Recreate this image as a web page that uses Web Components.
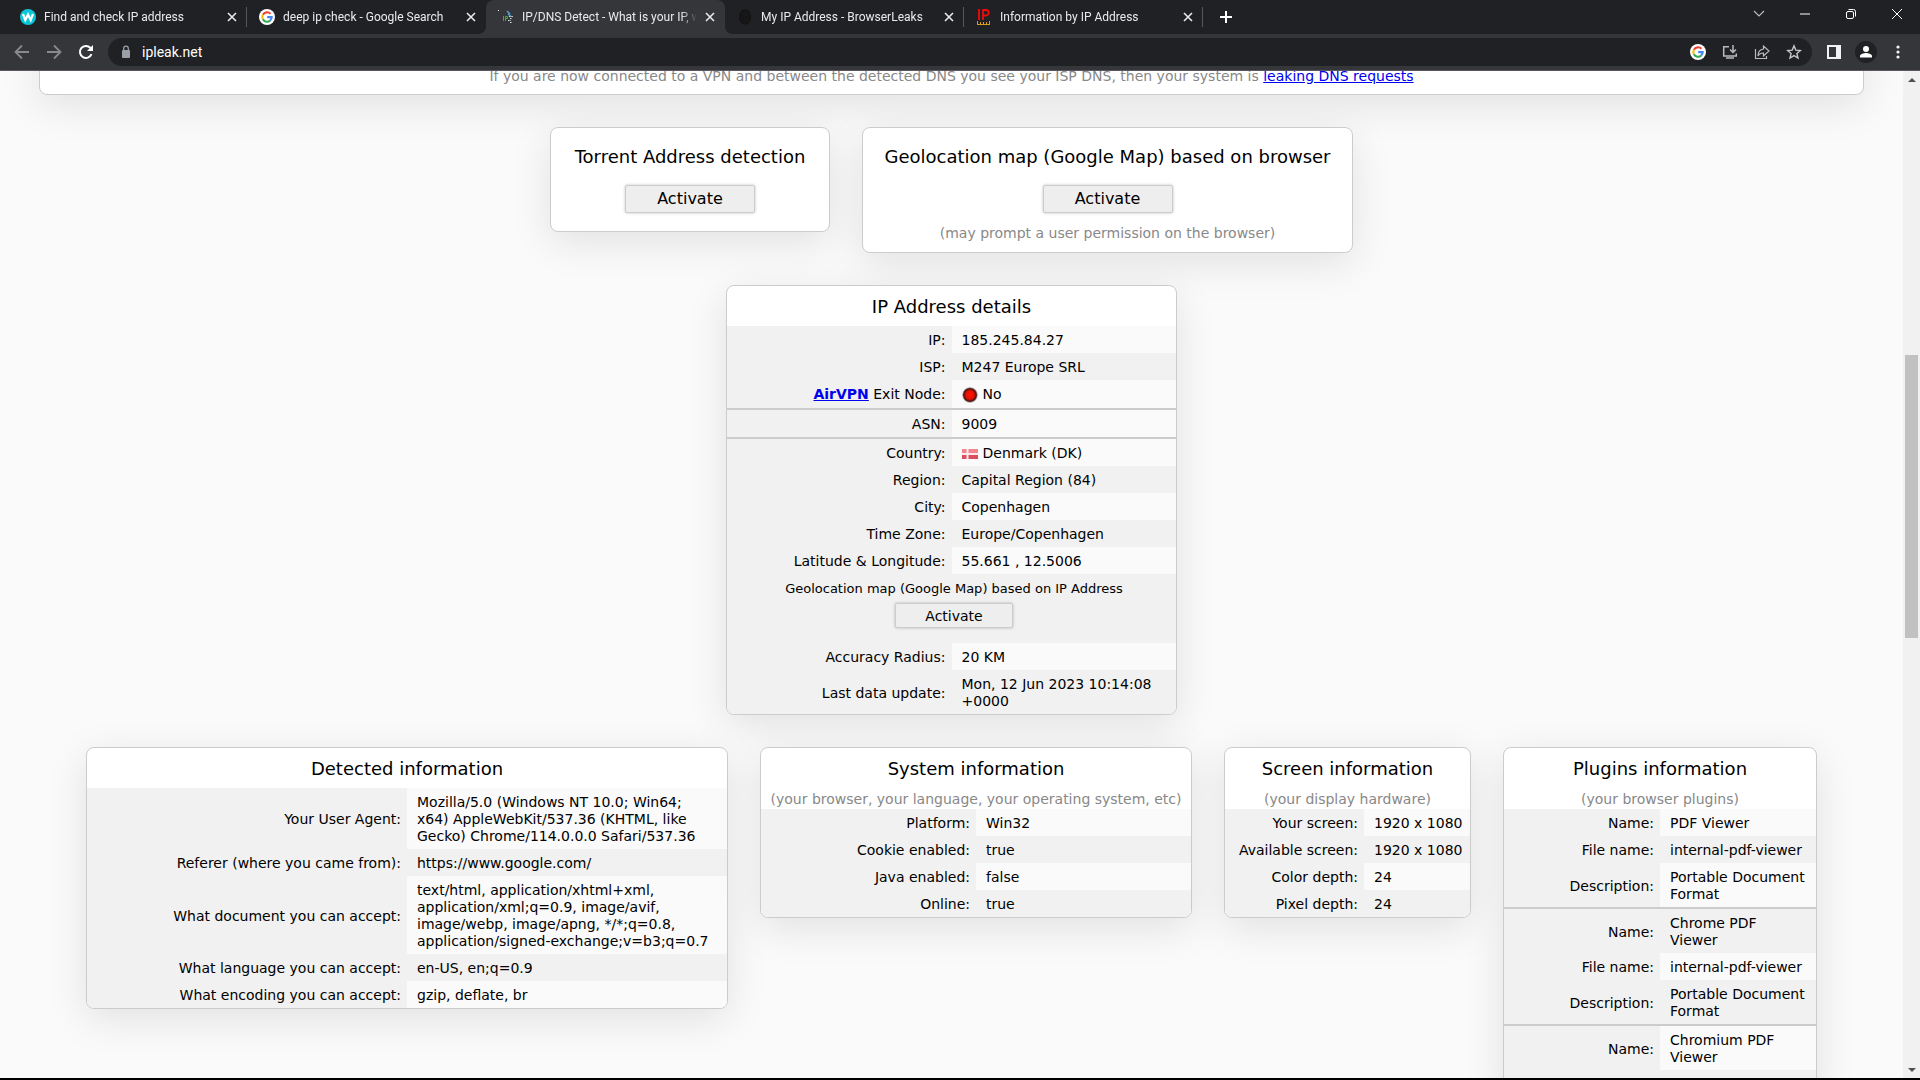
<!DOCTYPE html>
<html lang="en">
<head>
<meta charset="utf-8">
<title>IP/DNS Detect - What is your IP, what is your DNS</title>
<style>
  html, body {
    margin: 0;
    height: 100%;
    overflow: hidden;
  }

  body {
    font: 14px/17px Verdana, "DejaVu Sans", sans-serif;
    color: #000;
  }
</style>
</head>
<body>
<browser-window>
  <tab-strip slot="tabs">
    <browser-tab icon="w">Find and check IP address</browser-tab>
    <browser-tab icon="google">deep ip check - Google Search</browser-tab>
    <browser-tab icon="leak" active>IP/DNS Detect - What is your IP, w</browser-tab>
    <browser-tab icon="finger">My IP Address - BrowserLeaks</browser-tab>
    <browser-tab icon="ip">Information by IP Address</browser-tab>
  </tab-strip>
  <tool-bar slot="toolbar" url="ipleak.net"></tool-bar>
  <leak-page></leak-page>
</browser-window>

<script>
const icons = {
  w: `<svg width="16" height="16" viewBox="0 0 16 16"><circle cx="8" cy="8" r="8" fill="#0bc5d8"/><path d="M3 5l2.300 6L8 5.500l2.700 5.500L13 5" fill="none" stroke="#fff" stroke-width="2.200"/></svg>`,
  google: `<svg width="16" height="16" viewBox="0 0 16 16"><circle cx="8" cy="8" r="8" fill="#fff"/><g fill="none" stroke-width="2.100"><path d="M11.500 4.800A4.700 4.700 0 0 0 3.900 5.800" stroke="#ea4335"/><path d="M3.900 5.800a4.700 4.700 0 0 0 0 4.500" stroke="#fbbc05"/><path d="M3.900 10.300a4.700 4.700 0 0 0 7.300 1.200" stroke="#34a853"/><path d="M11.200 11.500A4.700 4.700 0 0 0 12.700 8.100H8.200" stroke="#4285f4"/></g></svg>`,
  leak: `<svg width="16" height="16" viewBox="0 0 16 16" fill="none"><path d="M0 1.500h1" stroke="#fff"/><path d="M5.500 7v5M7.500 12V7.500h2v2h-2" stroke="#3fae29"/><path d="M9 2l3 3M10 5l3 2" stroke="#4f9fd0" stroke-width="1.500"/><path d="M11 7.500h4M12 9.500h2M10 11.500h3M12 13.500h2" stroke="#dce6ea" stroke-dasharray="1.500 .8"/></svg>`,
  finger: `<svg width="16" height="16" viewBox="0 0 16 16"><ellipse cx="8" cy="8" rx="6" ry="7.500" fill="#111"/><g fill="none" stroke="#26272a" stroke-width=".6"><path d="M4 12V7a4 4 0 0 1 8 0v5M6 14V7a2 2 0 0 1 4 0v7M8 6v9"/></g></svg>`,
  ip: `<svg width="16" height="16" viewBox="0 0 16 16" fill="none"><path d="M3 0v11M7 11V1h3a2.500 2.500 0 0 1 0 5.500H7" stroke="#f00a0a" stroke-width="1.800"/><path d="M1.500 12v3M4.500 13v2M7.500 13v2M10.500 13v2M13.500 12v3M1 15.500h13" stroke="#d99a17"/></svg>`,
  close: `<svg width="10" height="10" viewBox="0 0 10 10"><path d="M1 1l8 8M9 1L1 9" stroke="#e8eaed" stroke-width="1.600"/></svg>`
};

const define = (name, html, setup) => {
  const template = document.createElement('template');
  template.innerHTML = html;

  customElements.define(name, class extends HTMLElement {
    connectedCallback() {
      if (this.shadowRoot) return;
      this.attachShadow({ mode: 'open' }).appendChild(template.content.cloneNode(true));
      if (setup) setup(this, this.shadowRoot);
    }
  });
};

define('browser-window', `
  <style>
    :host {
      display: flex;
      flex-direction: column;
      height: 100vh;
      box-sizing: border-box;
      border-bottom: 2px solid #000;
      background: #202124;
    }

    main {
      display: flex;
      flex: 1;
      min-height: 0;
      border-top: 1px solid #5b5660;
    }
  </style>
  <slot name="tabs"></slot>
  <slot name="toolbar"></slot>
  <main><slot></slot><scroll-bar></scroll-bar></main>
`);

define('tab-strip', `
  <style>
    :host {
      display: flex;
      height: 34px;
      padding-left: 8px;
      background: #202124;
    }

    button {
      display: grid;
      place-items: center;
      width: 46px;
      padding: 0 0 6px;
      border: 0;
      background: none;
    }

    .add {
      padding-bottom: 0;
    }

    .controls {
      display: flex;
      margin-left: auto;
    }
  </style>
  <slot></slot>
  <button class="add" aria-label="New tab"><svg width="12" height="12"><path d="M6 0v12M0 6h12" stroke="#fff" stroke-width="2"/></svg></button>
  <div class="controls">
    <button aria-label="Search tabs"><svg width="12" height="8" fill="none"><path d="M1 1l5 5 5-5" stroke="#bbb" stroke-width="1.200"/></svg></button>
    <button aria-label="Minimize"><svg width="10" height="2"><path d="M0 1h10" stroke="#fff"/></svg></button>
    <button aria-label="Restore"><svg width="12" height="12" fill="none" stroke="#fff"><rect x="1.500" y="3.500" width="7" height="7" rx="1.500"/><path d="M3.500 1.500h5a2 2 0 0 1 2 2v5"/></svg></button>
    <button aria-label="Close"><svg width="12" height="12"><path d="M1 1l10 10M11 1L1 11" stroke="#fff"/></svg></button>
  </div>
`);

define('browser-tab', `
  <style>
    :host {
      display: flex;
      align-items: center;
      flex: 0 1 239px;
      box-sizing: border-box;
      min-width: 0;
      padding: 0 10px 6px 12px;
      position: relative;
      font: 12px/16px Roboto, sans-serif;
      color: #e8eaed;
      padding-top: 6px;
    }

    :host::after {
      content: "";
      position: absolute;
      right: 0;
      top: 7px;
      height: 20px;
      width: 1px;
      background: #55575b;
    }

    :host([active]) {
      background: #35363a;
      border-radius: 8px 8px 0 0;
    }

    /* curved feet of the selected tab */
    :host([active])::before {
      content: "";
      position: absolute;
      left: -8px;
      right: -8px;
      bottom: 0;
      height: 8px;
      background:
        radial-gradient(circle at 0 0, transparent 8px, #35363a 8px) 0 0 / 8px 8px no-repeat,
        radial-gradient(circle at 100% 0, transparent 8px, #35363a 8px) 100% 0 / 8px 8px no-repeat;
    }

    :host([active])::after,
    :host([icon="google"])::after {
      display: none;
    }

    .title {
      flex: 1;
      margin: 0 8px;
      overflow: hidden;
      white-space: nowrap;
      -webkit-mask-image: linear-gradient(90deg, #000 calc(100% - 16px), transparent);
      mask-image: linear-gradient(90deg, #000 calc(100% - 16px), transparent);
    }

    .icon, button {
      display: grid;
      place-items: center;
      flex: none;
    }

    button {
      padding: 0;
      border: 0;
      background: none;
    }
  </style>
  <span class="icon"></span>
  <span class="title"><slot></slot></span>
  <button aria-label="Close tab">${icons.close}</button>
`, (el, root) => {
  root.querySelector('.icon').innerHTML = icons[el.getAttribute('icon')];
});

define('tool-bar', `
  <style>
    :host {
      display: flex;
      align-items: center;
      height: 36px;
      padding: 0 6px;
      background: #35363a;
    }

    button {
      display: grid;
      place-items: center;
      flex: none;
      width: 32px;
      height: 28px;
      padding: 0;
      border: 0;
      background: none;
    }

    .address {
      display: flex;
      align-items: center;
      flex: 1;
      height: 28px;
      margin: 0 6px;
      padding: 0 2px 0 12px;
      border-radius: 14px;
      background: #202124;
    }

    input {
      flex: 1;
      min-width: 0;
      margin-left: 10px;
      padding: 0;
      border: 0;
      background: none;
      color: #fff;
      font: 14px/20px Roboto, sans-serif;
    }
  </style>
  <button aria-label="Back"><svg width="16" height="16" fill="none" stroke="#87898c" stroke-width="1.800"><path d="M15 8H2M8 1.500L1.500 8 8 14.500"/></svg></button>
  <button aria-label="Forward"><svg width="16" height="16" fill="none" stroke="#87898c" stroke-width="1.800"><path d="M1 8h13M8 1.500L14.500 8 8 14.500"/></svg></button>
  <button aria-label="Reload"><svg width="16" height="16" fill="none"><path d="M13.500 10.200A6 6 0 1 1 12.300 3.800L13.500 5" stroke="#fff" stroke-width="2"/><path d="M15 1v6H9z" fill="#fff"/></svg></button>
  <div class="address">
    <svg width="12" height="14" fill="none"><rect x="2" y="5" width="8" height="8" rx="1" fill="#9aa0a6"/><path d="M3.700 6V3.500a2.300 2.300 0 0 1 4.600 0V6" stroke="#9aa0a6" stroke-width="1.300"/></svg>
    <input aria-label="Address" spellcheck="false">
    <button aria-label="Google">${icons.google}</button>
    <button aria-label="Install"><svg width="16" height="16" fill="none" stroke="#bbb" stroke-width="1.500"><path d="M7 2.700H1.700v9.300h12.600V9.500M4 14h8"/><path d="M11 1v7M8 5.500l3 3 3-3"/></svg></button>
    <button aria-label="Share"><svg width="16" height="16" fill="none" stroke="#bbb" stroke-width="1.200"><path d="M1.500 5v9.500h11V12"/><path d="M9.500 5V2l5.500 5-5.500 5V9C7 9 5 10 4 12c0-4 2-6.500 5.500-7z"/></svg></button>
    <button aria-label="Bookmark"><svg width="16" height="16" fill="none" stroke="#c4c6c9" stroke-width="1.400"><path d="M8 1.800l1.800 4.300 4.600.4-3.500 3 1.100 4.500L8 11.600 4 14l1.100-4.500-3.500-3 4.600-.4z"/></svg></button>
  </div>
  <button aria-label="Side panel"><svg width="14" height="14"><path d="M0 0h14v14H0zM2 2v10h7V2z" fill="#f1f3f4" fill-rule="evenodd"/></svg></button>
  <button aria-label="Profile"><svg width="22" height="22" fill="#fff"><circle cx="11" cy="11" r="11" fill="#202124"/><circle cx="11" cy="8" r="3"/><path d="M5 16.500v-1.500c0-2 4-3 6-3s6 1 6 3v1.500z"/></svg></button>
  <button aria-label="Menu"><svg width="4" height="14" fill="#f1f3f4"><circle cx="2" cy="2" r="1.600"/><circle cx="2" cy="7" r="1.600"/><circle cx="2" cy="12" r="1.600"/></svg></button>
`, (el, root) => {
  root.querySelector('input').value = el.getAttribute('url');
});

define('scroll-bar', `
  <style>
    :host {
      display: grid;
      grid-template-rows: 17px 267fr 283fr 423fr 17px;
      justify-items: center;
      align-items: center;
      flex: none;
      width: 17px;
      background: #f1f1f1;
    }

    i {
      grid-row: 3;
      width: 13px;
      height: 100%;
      background: #c1c1c1;
    }

    .down {
      grid-row: 5;
    }
  </style>
  <svg width="8" height="4" fill="#505050"><path d="M0 4l4-4 4 4z"/></svg>
  <i></i>
  <svg class="down" width="8" height="4" fill="#505050"><path d="M0 0l4 4 4-4z"/></svg>
`);

define('info-card', `
  <style>
    :host {
      display: block;
      box-sizing: border-box;
      overflow: hidden;
      border: 1px solid #ccc;
      border-radius: 8px;
      background: #fff;
      box-shadow: 0 10px 40px rgba(0, 0, 0, .1);
      text-align: center;
    }

    h2 {
      margin: 0;
      padding: 10px 0 8px;
      font-size: 18px;
      font-weight: normal;
      line-height: 22px;
      white-space: nowrap;
    }

    p {
      margin: 0;
      padding-top: 1px;
      line-height: 20px;
      color: #888;
      white-space: nowrap;
    }
  </style>
  <h2></h2>
  <p></p>
  <slot></slot>
`, (el, root) => {
  const fill = (tag, text) => {
    const node = root.querySelector(tag);
    if (text) node.textContent = text;
    else node.remove();
  };
  fill('h2', el.getAttribute('heading'));
  fill('p', el.getAttribute('note'));
});

define('activate-button', `
  <style>
    :host {
      display: block;
      text-align: center;
    }

    button {
      width: 130px;
      height: 28px;
      padding: 0;
      border: 1px solid #ccc;
      border-radius: 2px;
      background: #eee;
      box-shadow: 0 0 3px rgba(0, 0, 0, .25);
      color: #000;
      font: 16px/20px Verdana, "DejaVu Sans", sans-serif;
      vertical-align: top;
    }

    :host([small]) button {
      width: 118px;
      height: 25px;
      font-size: 14px;
    }
  </style>
  <button>Activate</button>
`);

// Base for the detail tables: a row is [label, value, flags]
class InfoTable extends HTMLElement {
  get rows() {
    return [];
  }

  get labelWidth() {
    return '50%';
  }

  row([label, value, flags = '']) {
    if (value === undefined) {
      return `<tr><td class="wide" colspan="2">${label}</td></tr>`;
    }
    return `<tr class="${flags}"><th scope="row">${label}:</th><td>${value}</td></tr>`;
  }

  connectedCallback() {
    if (this.shadowRoot) return;
    this.attachShadow({ mode: 'open' }).innerHTML = `
      <style>
        :host {
          display: block;
          text-align: left;
        }

        table {
          width: 100%;
          border-spacing: 0;
          table-layout: fixed;
        }

        th, td {
          padding: 6px 5px 4px 10px;
          background: #f1f1f1;
          font-weight: normal;
        }

        th {
          width: ${this.labelWidth};
          box-sizing: border-box;
          padding: 6px 6px 4px 0;
          text-align: right;
          white-space: nowrap;
        }

        .light td {
          background: #fafafa;
        }

        .tall th, .tall td {
          padding-bottom: 5px;
        }

        .end th, .end td {
          border-bottom: 2px solid #ccc;
        }

        .wide {
          padding-bottom: 15px;
          font-size: 13px;
          text-align: center;
        }

        activate-button {
          margin-top: 6px;
        }

        svg {
          margin-right: 5px;
          vertical-align: -4px;
        }
      </style>
      <table>${this.rows.map(this.row).join('')}</table>
    `;
  }
}

customElements.define('ip-details', class extends InfoTable {
  get rows() {
    const dot = `<svg width="16" height="16"><defs><radialGradient id="red"><stop offset="0" stop-color="#ff1500"/><stop offset=".5" stop-color="#e81000"/><stop offset=".8" stop-color="#4a1510"/><stop offset="1" stop-color="#777" stop-opacity=".2"/></radialGradient></defs><circle cx="8" cy="8" r="8" fill="url(#red)"/></svg>`;
    const flag = `<svg width="16" height="16"><path d="M0 3h16v5H0z" fill="#f0858f"/><path d="M0 8h16v5H0z" fill="#dc4e5f"/><path d="M5.500 3v10M0 8h16" stroke="#fbe9eb" stroke-width="2"/></svg>`;

    return [
      ['IP', '185.245.84.27', 'light'],
      ['ISP', 'M247 Europe SRL'],
      ['<a href="#airvpn"><b>AirVPN</b></a> Exit Node', `${dot}No`, 'light tall end'],
      ['ASN', '9009', 'light end'],
      ['Country', `${flag}Denmark (DK)`, 'light'],
      ['Region', 'Capital Region (84)'],
      ['City', 'Copenhagen', 'light'],
      ['Time Zone', 'Europe/Copenhagen'],
      ['Latitude &amp; Longitude', '55.661 , 12.5006', 'light'],
      ['Geolocation map (Google Map) based on IP Address<activate-button small></activate-button>'],
      ['Accuracy Radius', '20 KM', 'light'],
      ['Last data update', 'Mon, 12 Jun 2023 10:14:08<br>+0000']
    ];
  }
});

customElements.define('detected-info', class extends InfoTable {
  get rows() {
    return [
      ['Your User Agent', 'Mozilla/5.0 (Windows NT 10.0; Win64;<br>x64) AppleWebKit/537.36 (KHTML, like<br>Gecko) Chrome/114.0.0.0 Safari/537.36', 'light'],
      ['Referer (where you came from)', 'https://www.google.com/'],
      ['What document you can accept', 'text/html, application/xhtml+xml,<br>application/xml;q=0.9, image/avif,<br>image/webp, image/apng, */*;q=0.8,<br>application/signed-exchange;v=b3;q=0.7', 'light'],
      ['What language you can accept', 'en-US, en;q=0.9'],
      ['What encoding you can accept', 'gzip, deflate, br', 'light']
    ];
  }
});

customElements.define('system-info', class extends InfoTable {
  get rows() {
    return [
      ['Platform', 'Win32', 'light'],
      ['Cookie enabled', 'true'],
      ['Java enabled', 'false', 'light'],
      ['Online', 'true']
    ];
  }
});

customElements.define('screen-info', class extends InfoTable {
  get labelWidth() {
    return '139px';
  }

  get rows() {
    return [
      ['Your screen', '1920 x 1080', 'light'],
      ['Available screen', '1920 x 1080'],
      ['Color depth', '24', 'light'],
      ['Pixel depth', '24']
    ];
  }
});

customElements.define('plugins-info', class extends InfoTable {
  get rows() {
    const file = 'internal-pdf-viewer';
    const format = 'Portable Document<br>Format';

    return [
      ['Name', 'PDF Viewer', 'light'],
      ['File name', file],
      ['Description', format, 'light end'],
      ['Name', 'Chrome PDF<br>Viewer'],
      ['File name', file, 'light'],
      ['Description', format, 'end'],
      ['Name', 'Chromium PDF<br>Viewer', 'light'],
      ['File name', file]
    ];
  }
});

define('leak-page', `
  <style>
    :host {
      display: flex;
      flex: 1;
      flex-direction: column;
      gap: 32px;
      min-width: 0;
      box-sizing: border-box;
      padding: 0 39px;
      overflow: hidden;
      background: #fafafa;
    }

    .row {
      display: flex;
      justify-content: center;
      align-items: flex-start;
      gap: 32px;
    }

    /* the page is scrolled part of the way past the DNS card */
    .dns {
      flex: none;
      margin-top: -32px;
      padding: 28px 0 9px;
      color: #888;
    }

    .dns a {
      color: #00e;
    }

    .action {
      padding: 8px 0 9px;
    }

    .action activate-button {
      margin: 9px 0;
    }

    .action small {
      display: block;
      padding-top: 1px;
      font-size: 14px;
      line-height: 20px;
      color: #888;
    }

    .torrent { width: 280px; }
    .geo { width: 491px; }
    .ip { width: 451px; }
    .detected { width: 642px; }
    .system { width: 432px; }
    .screen { width: 247px; }
    .plugins { width: 314px; }
  </style>
  <info-card class="dns">If you are now connected to a VPN and between the detected DNS you see your ISP DNS, then your system is <a href="#leak">leaking DNS requests</a></info-card>
  <div class="row">
    <info-card class="action torrent" heading="Torrent Address detection">
      <activate-button></activate-button>
    </info-card>
    <info-card class="action geo" heading="Geolocation map (Google Map) based on browser">
      <activate-button></activate-button>
      <small>(may prompt a user permission on the browser)</small>
    </info-card>
  </div>
  <div class="row">
    <info-card class="ip" heading="IP Address details"><ip-details></ip-details></info-card>
  </div>
  <div class="row">
    <info-card class="detected" heading="Detected information"><detected-info></detected-info></info-card>
    <info-card class="system" heading="System information" note="(your browser, your language, your operating system, etc)"><system-info></system-info></info-card>
    <info-card class="screen" heading="Screen information" note="(your display hardware)"><screen-info></screen-info></info-card>
    <info-card class="plugins" heading="Plugins information" note="(your browser plugins)"><plugins-info></plugins-info></info-card>
  </div>
`);
</script>
</body>
</html>
